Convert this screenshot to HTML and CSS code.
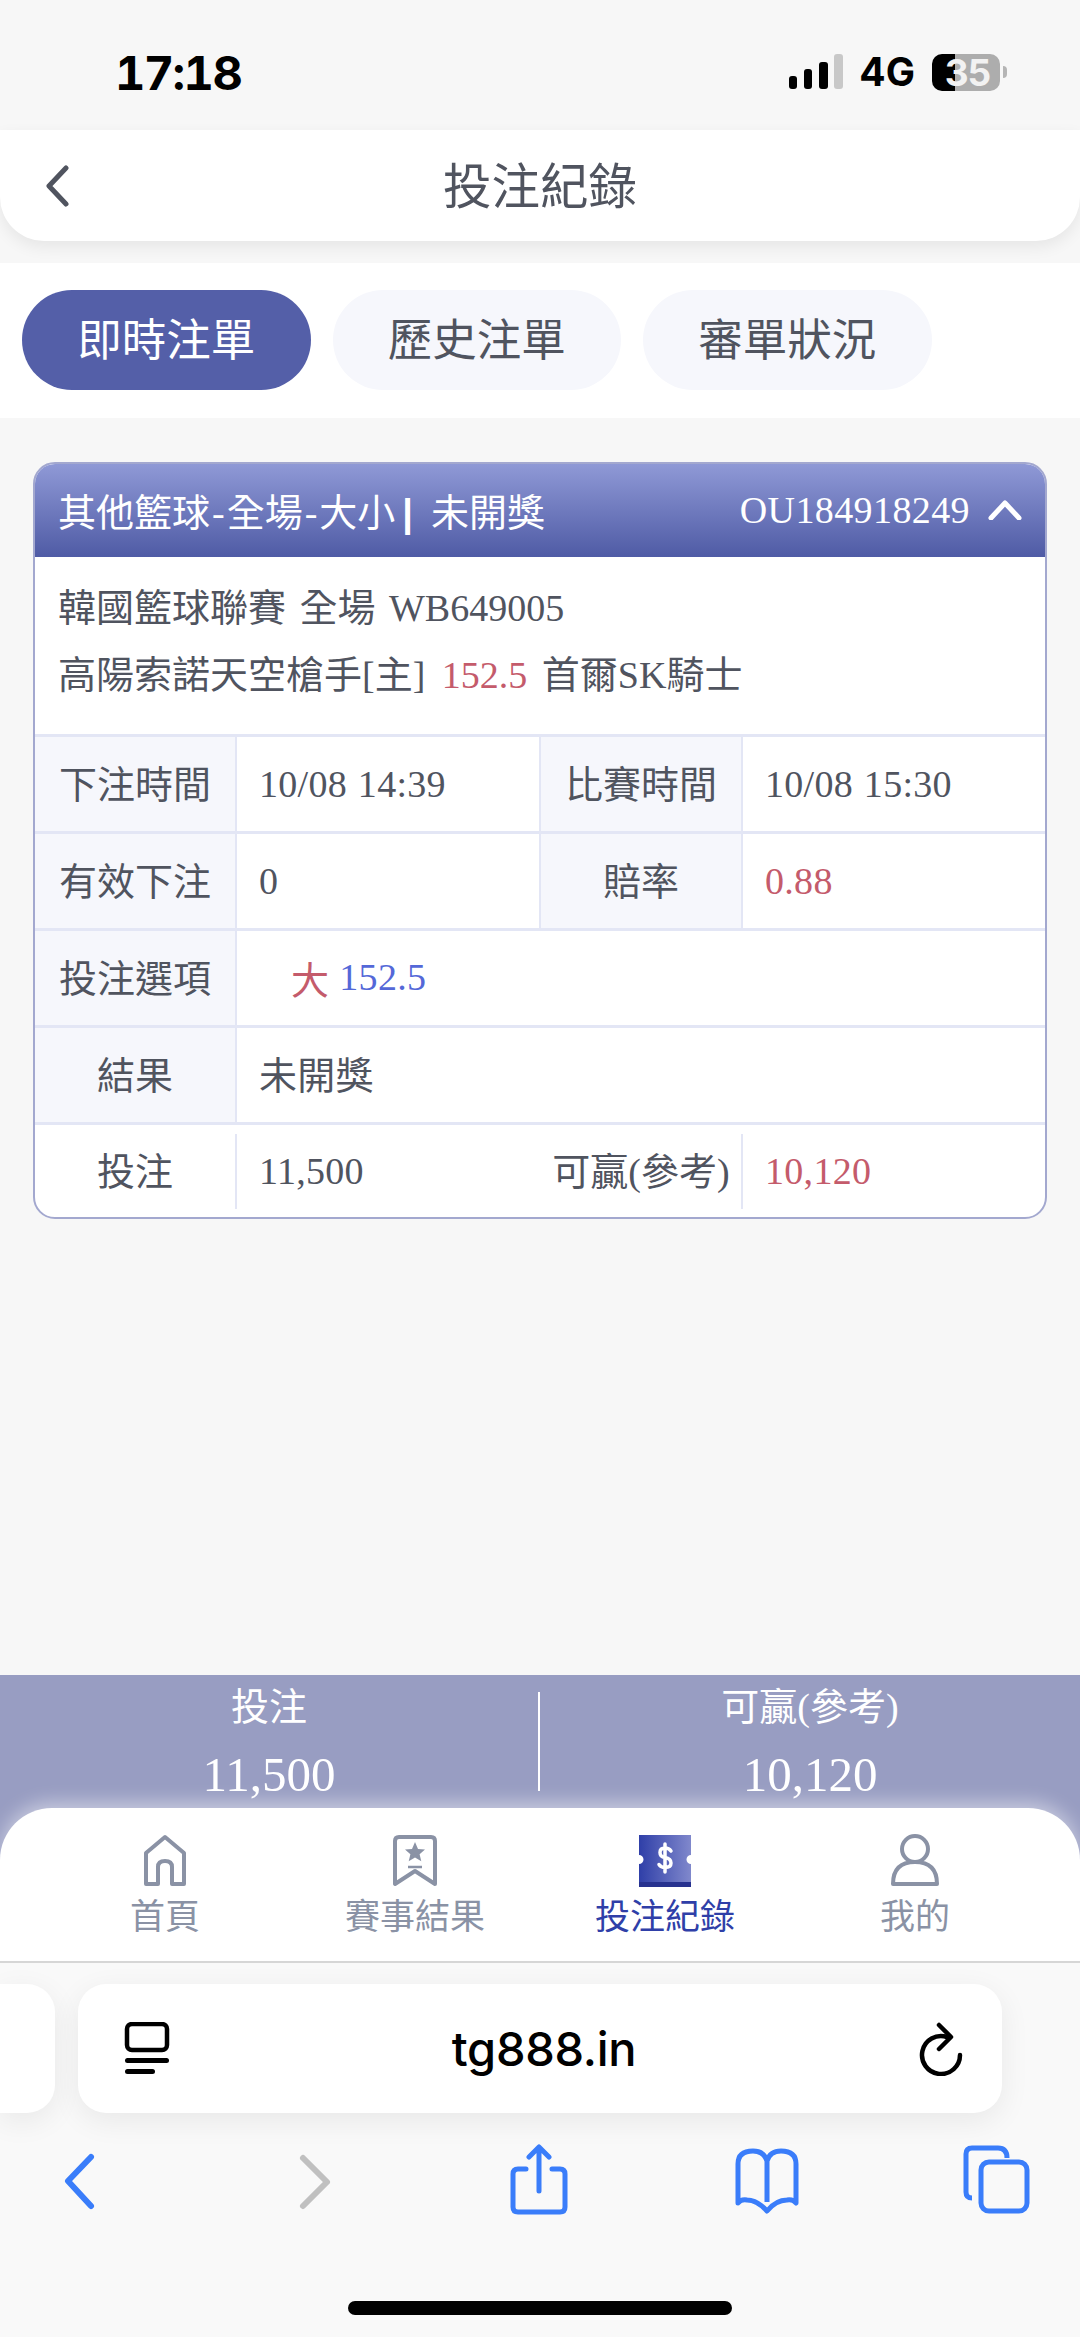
FILE: index.html
```html
<!doctype html>
<html>
<head>
	<title>投注紀錄</title>
	<meta charset="utf-8"/>
	<link rel="stylesheet" href="styles.css">
</head>
<body>
<div class="screen">

	<div class="status">
		<span class="time">17:18</span>
		<div class="status-right">
			<svg class="signal" width="54" height="36" viewBox="0 0 54 36">
				<rect x="0" y="22" width="8" height="13" rx="3" fill="#000"/>
				<rect x="15" y="15" width="8" height="20" rx="3" fill="#000"/>
				<rect x="30" y="8" width="9" height="27" rx="3" fill="#000"/>
				<rect x="45" y="0" width="9" height="35" rx="3" fill="#c8c8c8"/>
			</svg>
			<span class="net">4G</span>
			<div class="battery"><span class="battery-num">35</span></div>
			<div class="battery-nub"></div>
		</div>
	</div>

	<div class="topbar">
		<svg class="back" width="24" height="42" viewBox="0 0 24 42"><path d="M21 3 4 21l17 18" fill="none" stroke="#50545f" stroke-width="5" stroke-linecap="round" stroke-linejoin="round"/></svg>
		<h1>投注紀錄</h1>
		<span></span>
	</div>

	<div class="tabs">
		<div class="tab on"><span>即時注單</span></div>
		<div class="tab"><span>歷史注單</span></div>
		<div class="tab"><span>審單狀況</span></div>
	</div>

	<div class="card">
		<div class="card-head">
			<span>其他籃球<span class="dash">-</span>全場<span class="dash">-</span>大小<b class="bar">|</b>未開獎</span>
			<span class="card-id">OU184918249
				<svg width="34" height="20" viewBox="0 0 34 20"><path d="M3 18 17 3l14 15" fill="none" stroke="#fff" stroke-width="5" stroke-linecap="round" stroke-linejoin="round"/></svg>
			</span>
		</div>
		<div class="match">
			<p>韓國籃球聯賽 全場 WB649005</p>
			<p>高陽索諾天空槍手[主] <span class="red spread">152.5</span> 首爾SK騎士</p>
		</div>
		<div class="row">
			<div class="label">下注時間</div><div class="val">10/08 14:39</div>
			<div class="label">比賽時間</div><div class="val">10/08 15:30</div>
		</div>
		<div class="row">
			<div class="label">有效下注</div><div class="val">0</div>
			<div class="label">賠率</div><div class="val red">0.88</div>
		</div>
		<div class="row">
			<div class="label">投注選項</div><div class="val wide pick"><span class="red">大</span> <span class="blue">152.5</span></div>
		</div>
		<div class="row">
			<div class="label">結果</div><div class="val wide up">未開獎</div>
		</div>
		<div class="row last">
			<div class="label">投注</div><div class="val">11,500</div>
			<div class="label">可贏(參考)</div><div class="val red">10,120</div>
		</div>
	</div>

	<div class="grow"></div>

	<div class="summary">
		<div class="sum-col"><span>投注</span><span class="sum-num">11,500</span></div>
		<div class="sum-line"></div>
		<div class="sum-col"><span>可贏(參考)</span><span class="sum-num">10,120</span></div>
	</div>

	<div class="nav">
		<div class="nav-item">
			<svg width="50" height="54" viewBox="0 0 50 54"><path d="M6 50V19L25 3l19 16v31H32V33q0-6-7-6t-7 6v17Z" fill="none" stroke="#8a92a5" stroke-width="4" stroke-linejoin="round"/></svg>
			<span>首頁</span>
		</div>
		<div class="nav-item">
			<svg width="50" height="54" viewBox="0 0 50 54"><path d="M5 7q0-4 4-4h32q4 0 4 4v43L25 37 5 50Z" fill="none" stroke="#8a92a5" stroke-width="4" stroke-linejoin="round"/><path d="m25 8 3 7 7 .6-5.400 4.600 1.700 7L25 23.500 18.700 27.200l1.700-7L15 15.600l7-.6Z" fill="#8a92a5"/><path d="M18 33h14" stroke="#8a92a5" stroke-width="2.500"/></svg>
			<span>賽事結果</span>
		</div>
		<div class="nav-item">
			<svg width="54" height="54" viewBox="0 0 54 54">
				<defs><linearGradient id="tk" x1="0" x2="1" y1="0" y2="0"><stop offset="0" stop-color="#2f3fa8"/><stop offset="1" stop-color="#8088cc"/></linearGradient></defs>
				<path d="M1 1h52v20a4.500 4.500 0 0 0 0 9v23H1V30a4.500 4.500 0 0 0 0-9Z" fill="url(#tk)"/>
				<rect x="1" y="48" width="52" height="5" fill="#27328f"/>
				<path d="M33 17q-2-3-6-3-5 0-5 4.500t5 5q6 1 6 5.500t-6 4.500q-4 0-6-3M27 10v28" fill="none" stroke="#fff" stroke-width="3.500" stroke-linecap="round"/>
			</svg>
			<span class="active">投注紀錄</span>
		</div>
		<div class="nav-item">
			<svg width="50" height="54" viewBox="0 0 50 54"><circle cx="25" cy="15" r="13" fill="none" stroke="#8a92a5" stroke-width="4"/><path d="M3 50q0-22 22-22t22 22Z" fill="none" stroke="#8a92a5" stroke-width="4" stroke-linejoin="round"/></svg>
			<span>我的</span>
		</div>
	</div>

	<div class="safari">
		<div class="url-row">
			<div class="tab-peek"></div>
			<div class="url">
				<svg width="46" height="54" viewBox="0 0 46 54">
					<rect x="3" y="2" width="40" height="26" rx="5" fill="none" stroke="#000" stroke-width="4.500"/>
					<rect x="1" y="36" width="44" height="5" rx="2.500" fill="#000"/>
					<rect x="1" y="47" width="30" height="5" rx="2.500" fill="#000"/>
				</svg>
				<span class="domain">tg888.in</span>
				<svg width="46" height="54" viewBox="0 0 46 54">
					<path d="M29 14A19 19 0 1 0 42 32" transform="translate(0 1)" fill="none" stroke="#000" stroke-width="4.500" stroke-linecap="round"/>
					<path d="m21 3 12 12-12 12" fill="none" stroke="#000" stroke-width="4.500" stroke-linecap="round" stroke-linejoin="round"/>
				</svg>
			</div>
		</div>
		<div class="tools">
			<svg width="100" height="72" viewBox="0 0 100 72"><path d="M61 14 38 38l23 25" transform="translate(0 -1)" fill="none" stroke="#3a7dfa" stroke-width="6" stroke-linecap="round" stroke-linejoin="round"/></svg>
			<svg width="100" height="72" viewBox="0 0 100 72"><path d="M44 14 68 38 44 62" fill="none" stroke="#c0c0c0" stroke-width="6" stroke-linecap="round" stroke-linejoin="round"/></svg>
			<svg width="100" height="72" viewBox="0 0 100 72"><path d="M38 24H30q-5 0-5 5v33q0 5 5 5h42q5 0 5-5V29q0-5-5-5h-8M51 46V3M41 12 51 2l10 10" transform="translate(0 1)" fill="none" stroke="#3a7dfa" stroke-width="5" stroke-linecap="round" stroke-linejoin="round"/></svg>
			<svg width="100" height="72" viewBox="0 0 100 72"><path d="M50 17q-3-10-14-10-15 0-15 13v39q3-4 9-3 10 0 20 11 9-11 20-11 6-1 9 3V20q0-13-15-13-11 0-14 10Zm0 0v41" fill="none" stroke="#3a7dfa" stroke-width="5" stroke-linejoin="round"/></svg>
			<svg width="100" height="72" viewBox="0 0 100 72"><g transform="translate(4 2)"><path d="M22 52q-6 0-6-6V8q0-6 6-6h26q9 0 9 10" fill="none" stroke="#3a7dfa" stroke-width="5"/><rect x="31" y="16" width="46" height="49" rx="8" fill="none" stroke="#3a7dfa" stroke-width="5"/></g></svg>
		</div>
		<div class="home-bar"></div>
	</div>
</div>
</body>
</html>
```

FILE: styles.css
```css
* {
    margin: 0;
    box-sizing: border-box;
}

body {
    font-family: "Liberation Serif", "Noto Sans CJK TC", sans-serif;
    color: #50545f;
    background-color: #f7f7f7;
}

.screen {
    width: 1080px;
    height: 2337px;
    display: flex;
    flex-direction: column;
    overflow: hidden;
}

.grow {
    flex: 1;
}

/* status bar */
.status {
    height: 130px;
    flex-shrink: 0;
    padding: 49px 73px 0 115px;
    display: flex;
    justify-content: space-between;
    align-items: flex-start;
    font-family: Inter, sans-serif;
    font-weight: 700;
    color: #000;
}

.time {
    font-size: 47px;
    line-height: 47px;
    letter-spacing: -1.600px;
    font-variant-numeric: tabular-nums;
}

.status-right {
    display: flex;
    align-items: center;
    margin-top: 4px;
}

.signal {
    margin-right: 16px;
}

.net {
    font-size: 39px;
    line-height: 38px;
    margin-right: 17px;
}

.battery {
    width: 68px;
    height: 37px;
    border-radius: 10px;
    background: linear-gradient(90deg, #000 34%, #adadad 34%);
    display: flex;
    align-items: center;
    justify-content: center;
}

.battery-num {
    font-size: 37px;
    line-height: 37px;
    letter-spacing: -1px;
    color: #f2f2f2;
    padding-left: 3px;
}

.battery-nub {
    width: 4px;
    height: 12px;
    margin-left: 3px;
    border-radius: 0 4px 4px 0;
    background-color: #b5b5b5;
}

/* title */
.topbar {
    height: 111px;
    flex-shrink: 0;
    padding-left: 45px;
    background-color: #fff;
    border-radius: 0 0 44px 44px;
    box-shadow: 0 6px 16px rgba(0, 0, 0, 0.07);
    display: grid;
    grid-template-columns: 1fr auto 1fr;
    align-items: center;
}

.topbar h1 {
    font-size: 48.500px;
    font-weight: 400;
    margin: 0 0 6px -45px;
}

/* tabs */
.tabs {
    height: 155px;
    flex-shrink: 0;
    margin-top: 22px;
    padding: 27px 22px;
    display: flex;
    gap: 22px;
    background-color: #fff;
}

.tab {
    width: 288.500px;
    height: 100px;
    padding-bottom: 7px;
    border-radius: 50px;
    background-color: #f6f7fc;
    font-size: 44.500px;
    display: flex;
    align-items: center;
    justify-content: center;
}

.tab.on {
    background-color: #545fa8;
    color: #fff;
}

/* card */
.card {
    margin: 44px 33px 0 33px;
    border: 2px solid #a3a8cf;
    border-radius: 22px;
    background-color: #fff;
    overflow: hidden;
    font-size: 38px;
    word-spacing: 4px;
}

.card-head {
    height: 93px;
    padding: 0 23px 2px 23px;
    background: linear-gradient(180deg, #8f99d6, #4f5ba5);
    color: #fff;
    display: flex;
    align-items: center;
    justify-content: space-between;
}

.dash {
    padding: 0 2px;
}

.bar {
    font-family: "Liberation Sans", sans-serif;
    font-weight: 700;
    padding: 0 18px 0 7px;
}

.card-id {
    display: flex;
    align-items: center;
    gap: 18px;
    letter-spacing: 0.400px;
}

.match {
    height: 177px;
    padding: 18px 23px 0 23px;
}

.match p {
    line-height: 67px;
}

.spread {
    margin: 0 1px 0 3px;
}

.red {
    color: #c45b6b;
}

.blue {
    color: #5468d8;
}

.row {
    height: 97px;
    border-top: 3px solid #e3e6f5;
    display: grid;
    grid-template-columns: 200px 306px 200px 1fr;
}

.label {
    padding-bottom: 5px;
    background-color: #f6f7fc;
    display: flex;
    align-items: center;
    justify-content: center;
}

.val {
    border-left: 2px solid #e3e6f5;
    border-right: 2px solid #e3e6f5;
    padding-left: 22px;
    letter-spacing: 0.300px;
    word-spacing: 1px;
    display: flex;
    align-items: center;
    gap: 10px;
}

.val:last-child {
    border-right: none;
}

.wide {
    grid-column: 2 / 5;
    border-right: none;
}

.pick {
    padding-left: 54px;
    padding-bottom: 2px;
}

.up {
    padding-bottom: 5px;
}

.row.last {
    height: 95px;
    align-items: center;
}

.row.last .label {
    background: none;
    height: 75px;
}

.row.last .val {
    height: 75px;
    border-right: none;
}

.row.last .val:last-child {
    border-left: 2px solid #e3e6f5;
}

/* totals */
.summary {
    height: 193px;
    flex-shrink: 0;
    margin-bottom: -60px;
    padding-top: 7px;
    background-color: #989dc2;
    color: #fff;
    display: grid;
    grid-template-columns: 538px 2px 1fr;
    align-items: start;
    font-size: 38px;
}

.sum-col {
    display: flex;
    flex-direction: column;
    align-items: center;
}

.sum-col span {
    line-height: 50px;
}

.sum-num {
    font-size: 49px;
    margin-top: 18px;
}

.sum-line {
    height: 99px;
    margin-top: 10px;
    background-color: #fff;
}

/* bottom nav */
.nav {
    position: relative;
    height: 155px;
    flex-shrink: 0;
    padding: 26px 40px 0 40px;
    background-color: #fff;
    border-radius: 52px 52px 0 0;
    box-shadow: 0 -6px 18px rgba(255, 255, 255, 0.45);
    border-bottom: 2px solid #d6d6d6;
    display: grid;
    grid-template-columns: repeat(4, 250px);
}

.nav-item {
    display: flex;
    flex-direction: column;
    align-items: center;
    font-size: 35px;
    line-height: 52px;
    color: #8a92a5;
}

.nav-item span {
    margin-top: 4px;
}

.nav-item .active {
    color: #2f3fa8;
}

/* browser */
.safari {
    flex-shrink: 0;
    height: 374px;
    background-color: #f9f9f9;
    display: flex;
    flex-direction: column;
}

.url-row {
    margin-top: 21px;
    display: flex;
    gap: 23px;
}

.tab-peek {
    width: 55px;
    height: 129px;
    background-color: #fff;
    border-radius: 0 28px 28px 0;
    box-shadow: 0 8px 30px rgba(0, 0, 0, 0.07);
}

.url {
    width: 924px;
    height: 129px;
    padding: 0 38px 0 46px;
    background-color: #fff;
    border-radius: 28px;
    box-shadow: 0 8px 30px rgba(0, 0, 0, 0.07);
    display: flex;
    align-items: center;
    justify-content: space-between;
}

.domain {
    font-family: Inter, sans-serif;
    font-weight: 500;
    font-size: 47px;
    letter-spacing: -0.300px;
    color: #000;
}

.tools {
    margin-top: 31px;
    padding: 0 34px 0 30px;
    display: flex;
    justify-content: space-between;
}

.home-bar {
    width: 384px;
    height: 14px;
    margin: auto auto 22px auto;
    border-radius: 7px;
    background-color: #000;
}
```
